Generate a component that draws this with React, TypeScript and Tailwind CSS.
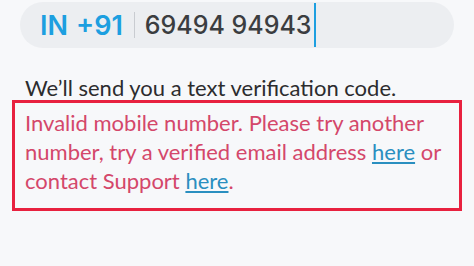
export default function App() {
	return (
		<div className="h-[266px] w-[474px] overflow-hidden bg-[#f7f8fa] font-['Lato',sans-serif]">
			<div className="px-[20px] pt-[2px]">
				<div className="flex h-[46px] items-center rounded-full bg-[#eceef1] pl-[20px] font-['Inter',sans-serif]">
					<span className="text-[27px] font-semibold leading-none text-[#1d9fe0]">IN</span>
					<span className="ml-[8px] text-[27px] font-semibold leading-none text-[#1d9fe0]">+91</span>
					<span className="ml-[11px] mr-[10px] h-[26px] w-px bg-[#c9ccd1]" />
					<span className="text-[25px] font-medium leading-none text-[#3b3d40]">69494 94943</span>
					<span className="ml-[2px] h-[44px] w-[2px] bg-[#1d9fe0]" />
				</div>
			</div>
			<p className="mt-[28px] pl-[25px] text-[22px] leading-[24px] text-[#2c2c2e]">
				We’ll send you a text verification code.
			</p>
			<div className="mx-[12px] border-[3px] border-[#e8213f] pb-[13px] pl-[10px] pr-[4px] pt-[5px]">
				<p className="text-[22px] leading-[29px] text-[#d4476a]">
					Invalid mobile number. Please try another number, try a verified email address{" "}
					<span className="text-[#2a8fc0] underline underline-offset-2">here</span> or contact Support{" "}
					<span className="text-[#2a8fc0] underline underline-offset-2">here</span>.
				</p>
			</div>
		</div>
	);
}
